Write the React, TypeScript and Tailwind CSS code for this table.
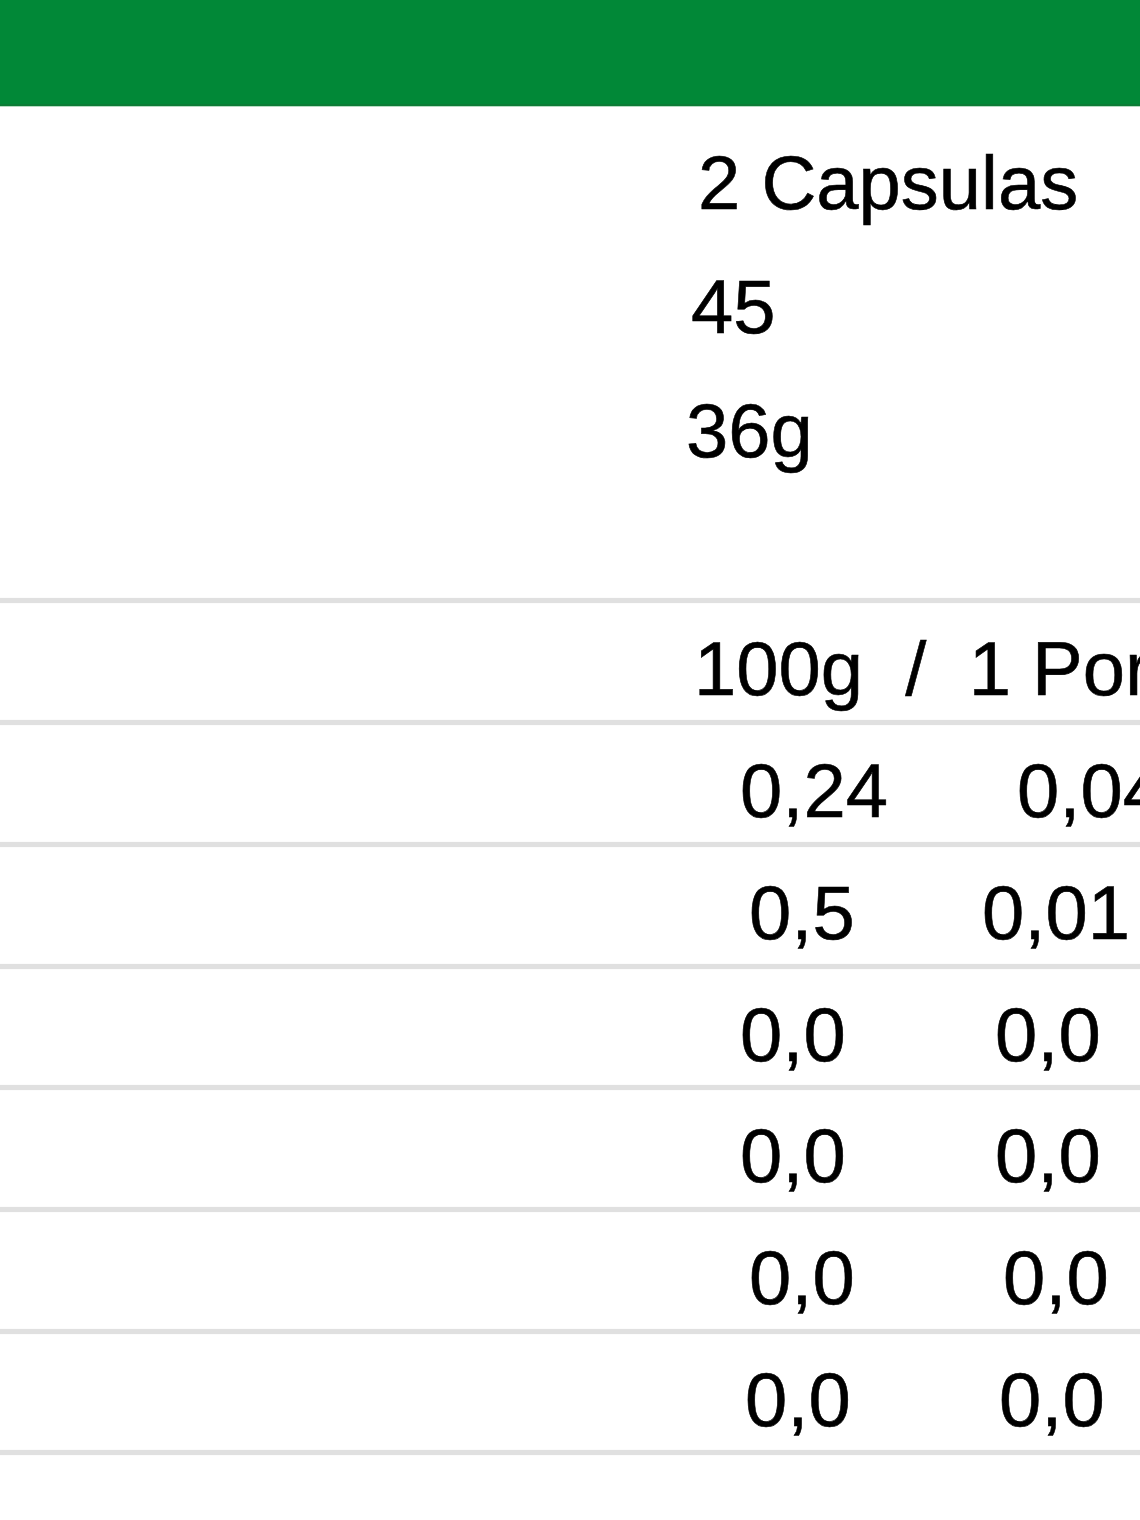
import React from "react";

type Row = { a: string; b: string; pl: string; w: string; h: string };

const rows: Row[] = [
  { a: "0,24", b: "0,04", pl: "pl-[740px]", w: "w-[277px]", h: "h-[117px]" },
  { a: "0,5", b: "0,01", pl: "pl-[749px]", w: "w-[233px]", h: "h-[117px]" },
  { a: "0,0", b: "0,0", pl: "pl-[740px]", w: "w-[255px]", h: "h-[116px]" },
  { a: "0,0", b: "0,0", pl: "pl-[740px]", w: "w-[255px]", h: "h-[117px]" },
  { a: "0,0", b: "0,0", pl: "pl-[749px]", w: "w-[254px]", h: "h-[117px]" },
  { a: "0,0", b: "0,0", pl: "pl-[745px]", w: "w-[254px]", h: "h-[116px]" },
];

function Line() {
  return <div className="h-[5px] bg-[#e0e0e0] shadow-[0_0_1px_#ececec]" />;
}

export default function App() {
  return (
    <div className="w-[1140px] h-[1520px] overflow-hidden bg-white text-black font-['Liberation_Sans',Arial,sans-serif] text-[76px] [-webkit-text-stroke:0.6px_black]">
      <div className="h-[104px] bg-[#018837]" />
      <div className="h-[2px] bg-[#0c7c36]" />
      <div className="h-[1px] bg-[#b6dcc2]" />
      <div className="pt-[14px] h-[491px]">
        <div className="leading-[124px] pl-[698px] whitespace-nowrap">2 Capsulas</div>
        <div className="leading-[124px] pl-[691px] whitespace-nowrap">45</div>
        <div className="leading-[124px] pl-[686px] whitespace-nowrap">36g</div>
      </div>
      <Line />
      <div className="h-[117px] pt-[14px] leading-[103px] pl-[694px] whitespace-pre">
        {"100g  /  1 Porção"}
      </div>
      <Line />
      {rows.map((r, i) => (
        <React.Fragment key={i}>
          <div className={`${r.h} pt-[14px] leading-[103px] flex whitespace-nowrap ${r.pl}`}>
            <span className={`${r.w} shrink-0`}>{r.a}</span>
            <span>{r.b}</span>
          </div>
          <Line />
        </React.Fragment>
      ))}
    </div>
  );
}
